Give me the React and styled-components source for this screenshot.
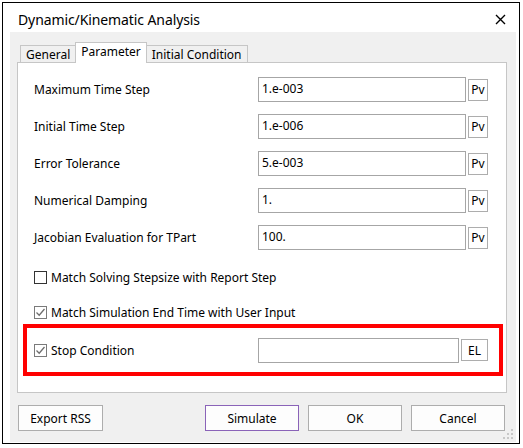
import React from "react";
import styled, { createGlobalStyle } from "styled-components";

const Global = createGlobalStyle`
  html, body { margin: 0; padding: 0; background: #fff; }
  body { font-family: "Noto Sans", "Open Sans", sans-serif; font-size: 12px; color: #000; }
  * { box-sizing: border-box; }
`;

const Window = styled.div`
  margin: 2px 0 0 2px;
  width: 518px;
  height: 442px;
  border: 1px solid #000;
  background: #fff;
  display: flex;
  flex-direction: column;
`;

const TitleBar = styled.div`
  height: 29px;
  flex: none;
  display: flex;
  align-items: center;
  justify-content: space-between;
  padding: 3px 13px 0 15px;
  font-size: 14px;
`;

const Title = styled.span`
  letter-spacing: -0.1px;
`;

const Body = styled.div`
  position: relative;
  flex: 1;
  margin: 0 3px 1px 7px;
  background: #f0f0f0;
  padding: 10px 9px 10px 7px;
  display: flex;
  flex-direction: column;
`;

const TabBar = styled.div`
  display: flex;
  align-items: flex-end;
  padding-left: 3px;
  height: 21px;
  position: relative;
  z-index: 1;
  margin-bottom: -1px;
`;

const Tab = styled.div`
  height: ${(p) => (p.$active ? "21px" : "18px")};
  padding: ${(p) => (p.$active ? "0 5px 3px" : "0 5px")};
  margin: ${(p) => (p.$active ? "0 -1px" : "0")};
  border: 1px solid #c6c6c6;
  border-bottom: ${(p) => (p.$active ? "none" : "1px solid #c6c6c6")};
  background: ${(p) => (p.$active ? "#fff" : "#f0f0f0")};
  display: flex;
  align-items: center;
  font-size: 12px;
  & + & { border-left: ${(p) => (p.$active ? "1px solid #c6c6c6" : "none")}; }
`;

const Panel = styled.div`
  background: #fff;
  border: 1px solid #c6c6c6;
  height: 331px;
  padding: 8px 16px 0 16px;
  display: flex;
  flex-direction: column;
`;

const FieldRow = styled.div`
  height: 37px;
  display: flex;
  align-items: center;
`;

const Label = styled.span`
  width: 224px;
  flex: none;
`;

const Input = styled.div`
  width: ${(p) => p.$w}px;
  height: 25px;
  border: 1px solid #a6a6a6;
  background: #fff;
  padding: 0 3px;
  display: flex;
  align-items: center;
  flex: none;
  padding-bottom: 3px;
`;

const SmallBtn = styled.div`
  width: ${(p) => p.$w}px;
  height: 22px;
  margin-left: 2px;
  border: 1px solid #adadad;
  background: #fff;
  display: flex;
  align-items: center;
  justify-content: center;
  font-size: 12px;
  flex: none;
`;

const CheckRow = styled.div`
  height: 22px;
  margin-top: ${(p) => p.$mt}px;
  display: flex;
  align-items: center;
`;

const Box = styled.span`
  width: 13px;
  height: 13px;
  border: 1px solid ${(p) => (p.$checked ? "#7a7a7a" : "#333")};
  background: #fff;
  display: flex;
  align-items: center;
  justify-content: center;
  margin-right: 4px;
  flex: none;
`;

const CheckLabel = styled.span`
  flex: none;
`;

const Highlight = styled.div`
  margin: 1px -13px 0 -11px;
  height: 52px;
  border: 4px solid #f00;
  padding: 0 9px 0 7px;
  display: flex;
  align-items: center;
`;

const StopLabel = styled.div`
  width: 224px;
  display: flex;
  align-items: center;
  flex: none;
`;

const Footer = styled.div`
  margin-top: 12px;
  display: flex;
  align-items: center;
  padding-left: 1px;
`;

const Button = styled.div`
  width: ${(p) => p.$w}px;
  height: 26px;
  border: 1px solid ${(p) => (p.$focus ? "#8a63b8" : "#adadad")};
  background: #fdfdfd;
  display: flex;
  align-items: center;
  justify-content: center;
  margin-left: ${(p) => p.$ml || 0}px;
  flex: none;
`;

const Grip = styled.svg`
  position: absolute;
  right: 3px;
  bottom: 3px;
`;

const Check = () => (
  <svg width="11" height="11" viewBox="0 0 11 11">
    <path d="M1.5 5.5 L4.2 8.2 L9.5 2" fill="none" stroke="#6d6d6d" strokeWidth="1.3" />
  </svg>
);

const fields = [
  ["Maximum Time Step", "1.e-003"],
  ["Initial Time Step", "1.e-006"],
  ["Error Tolerance", "5.e-003"],
  ["Numerical Damping", "1."],
  ["Jacobian Evaluation for TPart", "100."],
];

export default function App() {
  return (
    <>
      <Global />
      <Window>
        <TitleBar>
          <Title>Dynamic/Kinematic Analysis</Title>
          <svg width="11" height="11" viewBox="0 0 11 11">
            <path d="M1 1 L10 10 M10 1 L1 10" stroke="#000" strokeWidth="1.4" />
          </svg>
        </TitleBar>
        <Body>
          <TabBar>
            <Tab>General</Tab>
            <Tab $active>Parameter</Tab>
            <Tab>Initial Condition</Tab>
          </TabBar>
          <Panel>
            {fields.map(([l, v]) => (
              <FieldRow key={l}>
                <Label>{l}</Label>
                <Input $w={208}>{v}</Input>
                <SmallBtn $w={20}>Pv</SmallBtn>
              </FieldRow>
            ))}
            <CheckRow $mt={10}>
              <Box />
              <CheckLabel>Match Solving Stepsize with Report Step</CheckLabel>
            </CheckRow>
            <CheckRow $mt={13}>
              <Box $checked>
                <Check />
              </Box>
              <CheckLabel>Match Simulation End Time with User Input</CheckLabel>
            </CheckRow>
            <Highlight>
              <StopLabel>
                <Box $checked>
                  <Check />
                </Box>
                <CheckLabel>Stop Condition</CheckLabel>
              </StopLabel>
              <Input $w={201} />
              <SmallBtn $w={27}>EL</SmallBtn>
            </Highlight>
          </Panel>
          <Footer>
            <Button $w={85}>Export RSS</Button>
            <Button $w={94} $ml={102} $focus>Simulate</Button>
            <Button $w={94} $ml={9}>OK</Button>
            <Button $w={94} $ml={9}>Cancel</Button>
          </Footer>
          <Grip width="10" height="10" viewBox="0 0 10 10">
            <g fill="#c8c8c8">
              <rect x="8" y="0" width="2" height="2" />
              <rect x="8" y="4" width="2" height="2" />
              <rect x="4" y="4" width="2" height="2" />
              <rect x="8" y="8" width="2" height="2" />
              <rect x="4" y="8" width="2" height="2" />
              <rect x="0" y="8" width="2" height="2" />
            </g>
          </Grip>
        </Body>
      </Window>
    </>
  );
}
